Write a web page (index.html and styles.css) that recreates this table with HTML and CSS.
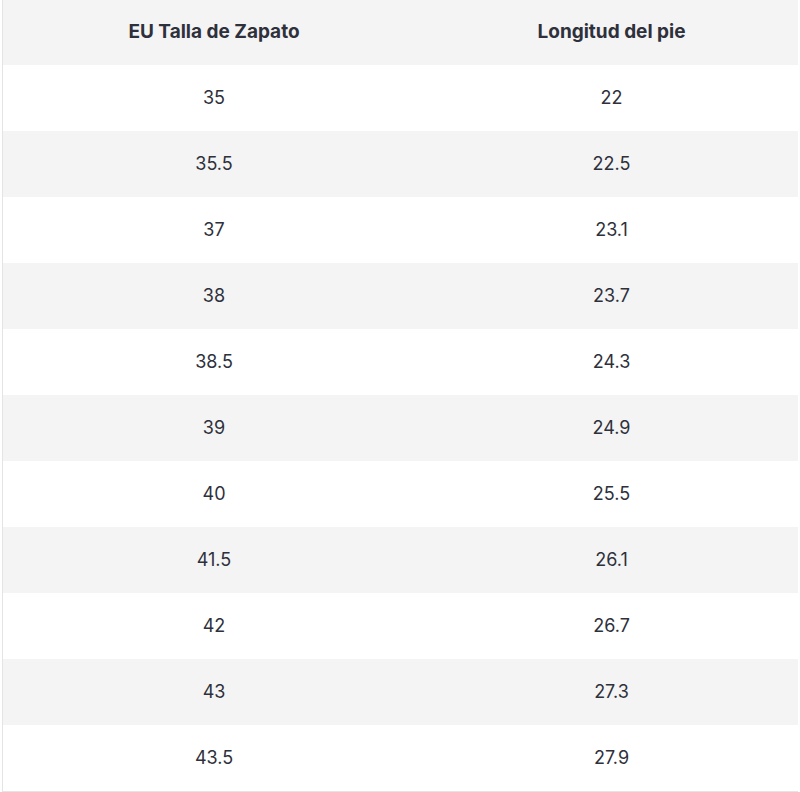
FILE: index.html
```html
<!DOCTYPE html>
<html lang="es">
<head>
<meta charset="utf-8">
<link rel="stylesheet" href="styles.css">
</head>
<body>
<div class="wrap">
<table class="size-table">
<thead>
<tr><th class="col-a">EU Talla de Zapato</th><th class="col-b">Longitud del pie</th></tr>
</thead>
<tbody>
<tr><td>35</td><td>22</td></tr>
<tr><td>35.5</td><td>22.5</td></tr>
<tr><td>37</td><td>23.1</td></tr>
<tr><td>38</td><td>23.7</td></tr>
<tr><td>38.5</td><td>24.3</td></tr>
<tr><td>39</td><td>24.9</td></tr>
<tr><td>40</td><td>25.5</td></tr>
<tr><td>41.5</td><td>26.1</td></tr>
<tr><td>42</td><td>26.7</td></tr>
<tr><td>43</td><td>27.3</td></tr>
<tr><td>43.5</td><td>27.9</td></tr>
</tbody>
</table>
</div>
</body>
</html>
```
FILE: styles.css
```css
html, body {
  margin: 0;
  padding: 0;
  background: #ffffff;
}
.wrap {
  padding-left: 2px;
}
.size-table {
  border-collapse: collapse;
  table-layout: fixed;
  width: 796px;
  border-left: 1px solid #e4e4e4;
  border-bottom: 1px solid #e4e4e4;
  font-family: Inter, "Noto Sans", sans-serif;
  color: #2e303b;
  font-size: 18px;
}
.col-a { width: 422px; }
.col-b { width: 373px; }
.size-table th,
.size-table td {
  text-align: center;
  padding: 0 0 2px;
  height: 64px;
}
.size-table th {
  height: 63px;
  font-size: 19px;
  font-weight: 700;
  background: #f4f4f4;
}
.size-table tbody tr:nth-child(even) td {
  background: #f4f4f4;
}
```
